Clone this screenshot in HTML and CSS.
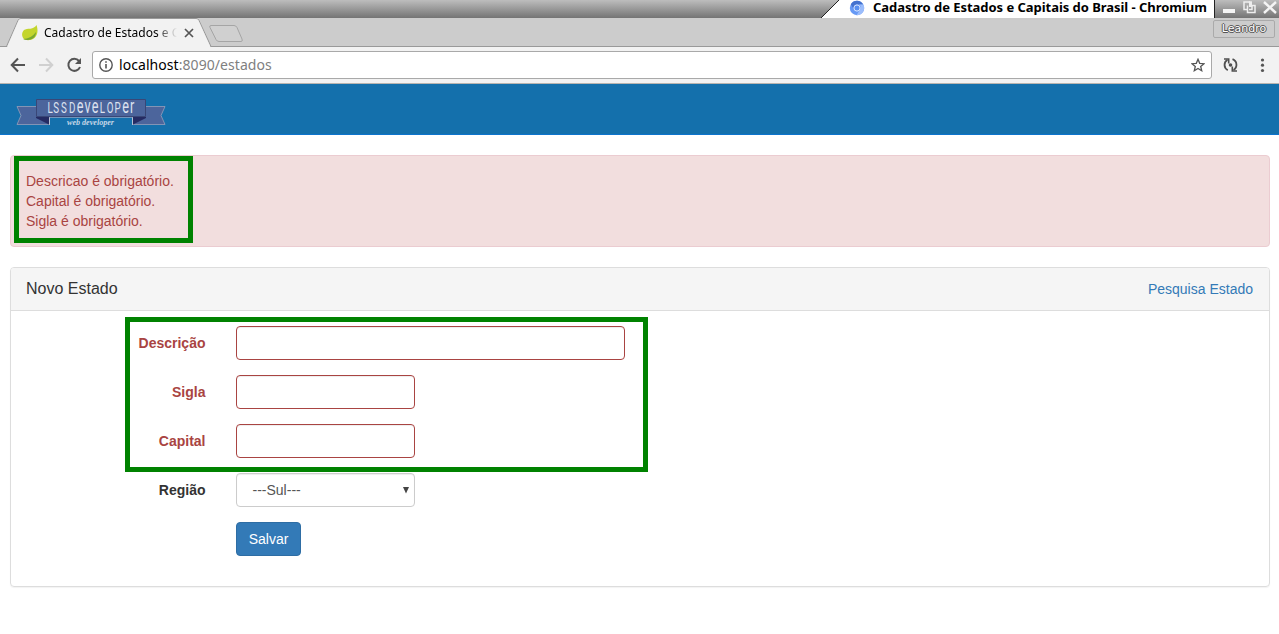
FILE: index.html
```html
<!DOCTYPE html>
<html lang="pt-BR">
<head>
<meta charset="utf-8">
<title>Cadastro de Estados e Capitais do Brasil</title>
<link rel="stylesheet" href="styles.css">
</head>
<body>
<header class="titlebar">
  <div class="caption">
    <svg class="slant" width="18" height="18" viewBox="0 0 18 18"><path d="M0 18 18 0V18z" fill="#fff"/><path d="M0 18 18 0" stroke="#222" fill="none"/></svg>
    <svg class="chromium" width="16" height="16" viewBox="0 0 16 16"><circle cx="8" cy="8" r="7.2" fill="#6699f5"/><path d="M1.8 4.3A7.2 7.2 0 0 1 14.3 4.6H8A3.5 3.5 0 0 0 4.7 9z" fill="#4472ce"/><path d="M14.3 4.6A7.2 7.2 0 0 1 7.5 15.2l3.6-5.6A3.6 3.6 0 0 0 10 4.6z" fill="#9bbdfc"/><circle cx="8" cy="8" r="3.1" fill="#5a90f0" stroke="#dce8ff"/></svg>
    <span class="caption-text">Cadastro de Estados e Capitais do Brasil - Chromium</span>
  </div>
  <svg class="window-buttons" width="64" height="18" viewBox="0 0 64 18"><path d="M8 9h12v4H8z" fill="#f4f4f4"/><path d="M34.500 3V2H29V9.500H32" fill="none" stroke="#eee" stroke-width="1.500"/><path d="M32.500 5.500V12.500H40V5.500H37V9.500H34" fill="none" stroke="#eee" stroke-width="1.500"/><path d="M34 1.300H37V7H34z" fill="#eee"/><path d="m49 2 12 11M61 2 49 13" stroke="#f4f4f4" stroke-width="2.400"/></svg>
</header>
<div class="tabs">
  <svg class="tab-shape" width="250" height="29" viewBox="0 0 250 29"><path d="M0 28.500H6.500L18 2.500Q19 .5 21 .5H196Q198 .5 199 2.500L211 28.500H250" fill="none" stroke="#999"/><path d="M7 29 18.500 2.500Q19 1 21 1H196Q198 1 198.500 2.500L210.500 29z" fill="#f2f2f2"/><path d="M211 7.500H234Q236 7.500 237 9.500L242 21Q243 23.500 241 23.500H219Q217 23.500 216 21.500L210 9.500Q209 7.500 211 7.500z" fill="#d0d0d0" stroke="#a5a5a5"/></svg>
  <div class="tab">
    <svg width="18" height="16" viewBox="0 0 18 16"><path d="M15.500 0C17 4 17.500 11 12 14C8 16 4 15 3 14C1 12 0 8 3 5C6 3 13 5 15.500 0z" fill="#c3d52d"/><path d="M2 14Q10 14 15 7Q15 12 11 14Q6 16 2 14z" fill="#79a832"/></svg>
    <span class="tab-title">Cadastro de Estados e C</span>
    <svg class="tab-close" width="10" height="10" viewBox="0 0 10 10"><path d="m1 1 8 8M9 1 1 9" stroke="#555" stroke-width="1.700"/></svg>
  </div>
  <span class="profile">Leandro</span>
</div>
<nav class="toolbar">
  <svg class="nav-icons" width="92" height="36" viewBox="0 0 92 36"><g fill="none" stroke-width="2"><path d="M25 18H12M18 11.500 11.700 18 18 24.500" stroke="#555"/><path d="M39 18H52M46 11.500 52.300 18 46 24.500" stroke="#d0d0d0"/><path d="M79 14A6 6 0 1 0 80 20" stroke="#555"/></g><path d="M81 11V17H75z" fill="#555"/></svg>
  <div class="address">
    <svg width="14" height="14" viewBox="0 0 14 14"><circle cx="7" cy="7" r="6.200" fill="none" stroke="#555" stroke-width="1.400"/><path d="M6.200 6h1.600v4.500H6.200zM6.200 3.200h1.600v1.600H6.200z" fill="#555"/></svg>
    <span class="url"><span class="host">localhost</span>:8090/estados</span>
    <svg class="star" width="14" height="14" viewBox="0 0 14 14"><path d="m7 1.300 1.700 4 4.300.4-3.300 2.800 1 4.200L7 10.500l-3.700 2.200 1-4.200L1 5.700l4.300-.4z" fill="none" stroke="#555" stroke-width="1.300"/></svg>
  </div>
  <svg class="tool-icons" width="67" height="36" viewBox="0 0 67 36"><g fill="none" stroke="#505050" stroke-width="1.800"><path d="M15.800 23.200A6 6 0 0 1 15.500 12.700M20.500 12.200A6 6 0 0 1 21.500 23"/><path d="M12 12H16.700V16.500M25 24H20.300V19.500" stroke-width="1.600"/></g><circle cx="18.500" cy="18" r="1.800" fill="#505050"/><g fill="#555"><circle cx="50.500" cy="13" r="1.600"/><circle cx="50.500" cy="18.200" r="1.600"/><circle cx="50.500" cy="23.500" r="1.600"/></g></svg>
</nav>
<div class="brand">
  <svg class="logo" width="150" height="30" viewBox="0 0 150 30"><path d="M1 8.500H33V26.500H1L5 17.500zM149 8.500H117V26.500H149L145 17.500z" fill="#4c659c" stroke="#98a0ba" stroke-width=".8"/><path d="M20 19V20L33 26.500V19zM130 19V20L117 26.500V19z" fill="#252b63"/><path d="M33.500 19V27M116.500 19V27" stroke="#c3c8d7" stroke-width=".9"/><path d="M20.500 1.500H129.500V18.500H20.500z" fill="#4c659c" stroke="#394777"/><path d="M33 19.500H117" stroke="#9aa6c4" stroke-width=".7"/><text class="logo-name" transform="scale(.65 1)" y="15" x="48.3 57.4 69.2 81.500 93.500 105.200 116.500 129 139.500 151.700 163.500 175.500">LSSD<tspan class="tall">eve</tspan>LOP<tspan class="tall">er</tspan></text><text class="logo-sub" x="51" y="27" textLength="47" lengthAdjust="spacingAndGlyphs">web developer</text></svg>
</div>
<main class="page">
  <div class="alert">
    <div>Descricao é obrigatório.</div><div>Capital é obrigatório.</div><div>Sigla é obrigatório.</div>
    <div class="mark mark-alert"></div>
  </div>
  <section class="panel">
    <div class="panel-heading"><h1>Novo Estado</h1><a>Pesquisa Estado</a></div>
    <form class="form">
      <div class="row error"><label>Descrição</label><div class="field wide"></div></div>
      <div class="row error"><label>Sigla</label><div class="field"></div></div>
      <div class="row error"><label>Capital</label><div class="field"></div></div>
      <div class="row"><label>Região</label><div class="field select"><span>---Sul---</span><svg width="6" height="7" viewBox="0 0 6 7"><path d="M0 0H6L3 6.500z" fill="#444"/></svg></div></div>
      <div class="row"><label></label><button class="save" type="button">Salvar</button></div>
      <div class="mark mark-form"></div>
    </form>
  </section>
</main>
</body>
</html>
```
FILE: styles.css
```css
* { box-sizing: border-box; }
body { margin: 0; background: #fff; color: #333; font: 14px/20px "Liberation Sans", Arial, sans-serif; height: 634px; overflow: hidden; }
svg { display: block; flex: none; }
.titlebar { height: 18px; display: flex; justify-content: flex-end; background: linear-gradient(#bdbdbd, #747474); }
.caption { width: 394px; display: flex; background: linear-gradient(#fff, #fff) 18px 0 no-repeat; border-right: 1px solid #222; }
.chromium { margin-left: 10px; }
.caption-text { margin-left: 8px; font: bold 13px/15px "Noto Sans", sans-serif; letter-spacing: -.04px; color: #000; white-space: nowrap; }
.tabs { height: 29px; position: relative; display: flex; justify-content: space-between; background: #ccc; border-bottom: 1px solid #999; }
.tab-shape { position: absolute; left: 0; top: 0; }
.tab { position: relative; display: flex; align-items: center; height: 29px; padding-left: 21px; }
.tab-title { width: 139px; margin-left: 5px; white-space: nowrap; color: #000; font: 12px/18px "Noto Sans", sans-serif; -webkit-mask-image: linear-gradient(90deg, #000 112px, transparent 133px); mask-image: linear-gradient(90deg, #000 112px, transparent 133px); }
.tab-close { margin-left: 1px; }
.profile { width: 62px; height: 18px; margin: 2px 4px 0 0; border: 1px solid #aaa; border-radius: 2px; text-align: center; font: 11px/16px "DejaVu Sans", sans-serif; color: #fff; text-shadow: -1px 0 #555, 1px 0 #555, 0 -1px #555, 0 1px #555; }
.toolbar { height: 37px; display: flex; background: #f2f2f2; border-bottom: 1px solid #b8b4b0; }
.address { width: 1120px; height: 28px; margin-top: 4px; padding: 0 6px; display: flex; align-items: center; background: #fff; border: 1px solid #a9a9a9; border-radius: 3px; }
.url { margin-left: 6px; font: 14px/24px "Noto Sans", sans-serif; letter-spacing: .06px; color: #808080; }
.host { color: #000; }
.star { margin-left: auto; }
.brand { height: 51px; padding: 14px 0 0 16px; background: #1470ac; border-bottom: 1px solid #0d74cd; }
.logo-name { font: 15px "Roboto", sans-serif; fill: #dce2ef; }
.tall { font-size: 19.5px; }
.logo-sub { font: italic bold 8px "Liberation Serif", serif; fill: #c5d6e7; }
.page { padding: 20px 9px 0 10px; }
.alert { position: relative; height: 92px; padding: 15px; color: #a94442; background: #f2dede; border: 1px solid #ebccd1; border-radius: 4px; }
.mark { position: absolute; border: 5px solid #008200; pointer-events: none; }
.mark-alert { left: 3px; top: 0; width: 179px; height: 87px; }
.panel { height: 320px; margin-top: 20px; border: 1px solid #ddd; border-radius: 4px; box-shadow: 0 1px 1px rgba(0,0,0,.05); }
.panel-heading { height: 43px; padding: 0 16px 0 15px; display: flex; align-items: center; justify-content: space-between; background: #f5f5f5; border-bottom: 1px solid #ddd; border-radius: 3px 3px 0 0; }
.panel-heading h1 { margin: 0; font-size: 16px; font-weight: normal; }
.panel-heading a { color: #337ab7; }
.form { position: relative; display: grid; gap: 15px; padding-top: 15px; }
.row { display: grid; grid-template-columns: 195px auto; column-gap: 30px; align-items: center; justify-content: start; height: 34px; }
.row label { padding-right: .5px; text-align: right; font-weight: bold; }
.error label { color: #a94442; }
.field { width: 179px; height: 34px; border: 1px solid #ccc; border-radius: 4px; box-shadow: inset 0 1px 1px rgba(0,0,0,.075); color: #555; }
.wide { width: 389px; }
.error .field { border-color: #a94442; }
.select { display: flex; align-items: center; justify-content: space-between; padding: 0 5px 0 15.5px; }
.save { width: 65px; height: 34px; padding: 0; border: 1px solid #2e6da4; border-radius: 4px; background: #337ab7; color: #fff; font: 14px/20px "Liberation Sans", Arial, sans-serif; }
.mark-form { left: 114px; top: 6px; width: 523px; height: 155px; }
```
